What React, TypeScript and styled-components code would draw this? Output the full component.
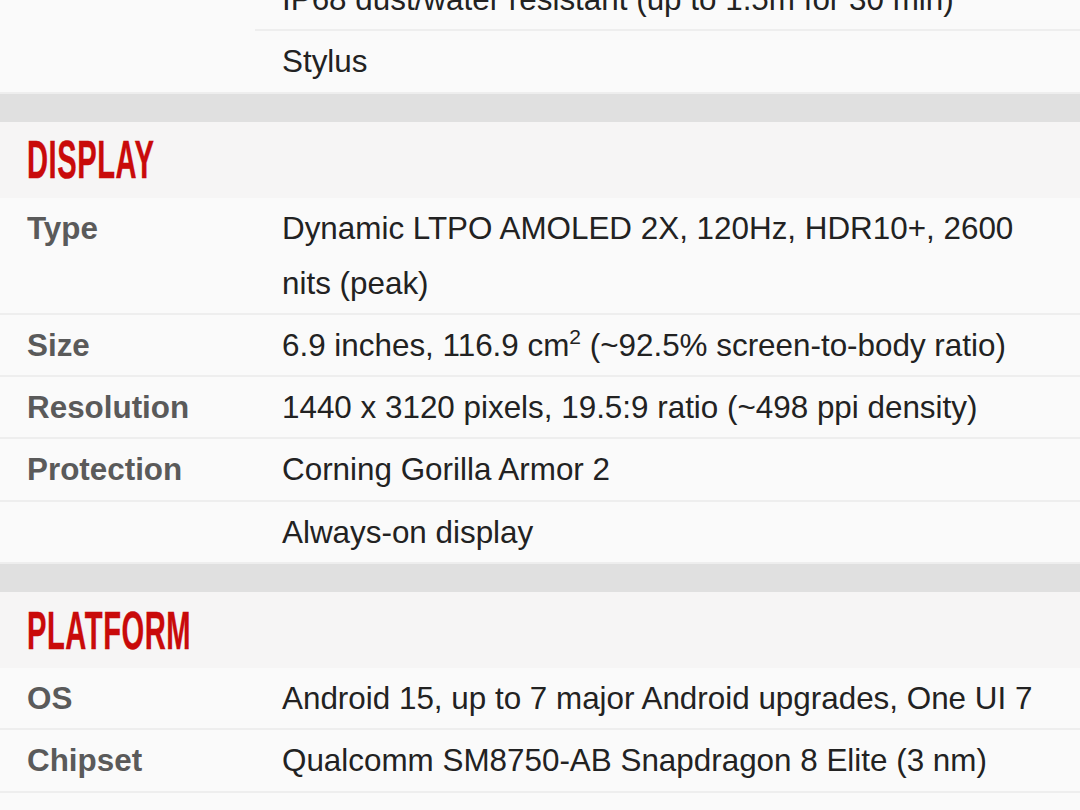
import React from "react";
import styled, { createGlobalStyle } from "styled-components";

const Global = createGlobalStyle`
  html, body { margin: 0; padding: 0; background: #fafafa; }
  body { font-family: "Liberation Sans", Arial, sans-serif; overflow: hidden; }
`;

const Page = styled.div`
  width: 1080px;
  margin-top: -31px;
  background: #fafafa;
`;

const Spacer = styled.div`
  height: 28px;
  background: #e0e0e0;
`;

const Header = styled.div`
  height: 76px;
  background: #f6f5f5;
  display: flex;
  align-items: center;
  padding-left: 27px;
`;

const Heading = styled.h2`
  margin: 0;
  font-family: "Liberation Sans", Arial, sans-serif;
  font-weight: 700;
  font-size: 53px;
  line-height: 1;
  color: #c90a0a;
  transform: scaleX(0.55);
  transform-origin: left center;
  -webkit-text-stroke: 0.4px #c90a0a;
  white-space: nowrap;
  letter-spacing: 1px;
`;

const Row = styled.div<{ $inner?: boolean }>`
  display: grid;
  grid-template-columns: 255px 1fr;
  border-bottom: ${(p) => (p.$inner ? "none" : "2px solid #eeeeee")};
`;

const Label = styled.div`
  padding: 3px 0 2.3px 27px;
  font-size: 31.4px;
  line-height: 55px;
  font-weight: 700;
  color: #5a5a5a;
`;

const Value = styled.div<{ $inner?: boolean }>`
  padding: 3px 27px 2.3px 27px;
  font-size: 31.4px;
  line-height: 55px;
  color: #222222;
  border-bottom: ${(p) => (p.$inner ? "2px solid #eeeeee" : "none")};
  sup {
    font-size: 21px;
    line-height: 0;
    vertical-align: 12px;
  }
`;

type Spec = { label: string; value: React.ReactNode; inner?: boolean };

const SpecRow = ({ label, value, inner }: Spec) => (
  <Row $inner={inner}>
    <Label>{label}</Label>
    <Value $inner={inner}>{value}</Value>
  </Row>
);

const Section = ({ title, rows }: { title: string; rows: Spec[] }) => (
  <>
    <Spacer />
    <Header>
      <Heading>{title}</Heading>
    </Header>
    {rows.map((r, i) => (
      <SpecRow key={i} {...r} />
    ))}
  </>
);

export default function App() {
  return (
    <>
      <Global />
      <Page>
        <SpecRow label="" value="IP68 dust/water resistant (up to 1.5m for 30 min)" inner />
        <SpecRow label="" value="Stylus" />
        <Section
          title="DISPLAY"
          rows={[
            { label: "Type", value: "Dynamic LTPO AMOLED 2X, 120Hz, HDR10+, 2600 nits (peak)" },
            {
              label: "Size",
              value: (
                <>
                  6.9 inches, 116.9 cm<sup>2</sup> (~92.5% screen-to-body ratio)
                </>
              ),
            },
            { label: "Resolution", value: "1440 x 3120 pixels, 19.5:9 ratio (~498 ppi density)" },
            { label: "Protection", value: "Corning Gorilla Armor 2" },
            { label: "", value: "Always-on display" },
          ]}
        />
        <Section
          title="PLATFORM"
          rows={[
            { label: "OS", value: "Android 15, up to 7 major Android upgrades, One UI 7" },
            { label: "Chipset", value: "Qualcomm SM8750-AB Snapdragon 8 Elite (3 nm)" },
          ]}
        />
      </Page>
    </>
  );
}
